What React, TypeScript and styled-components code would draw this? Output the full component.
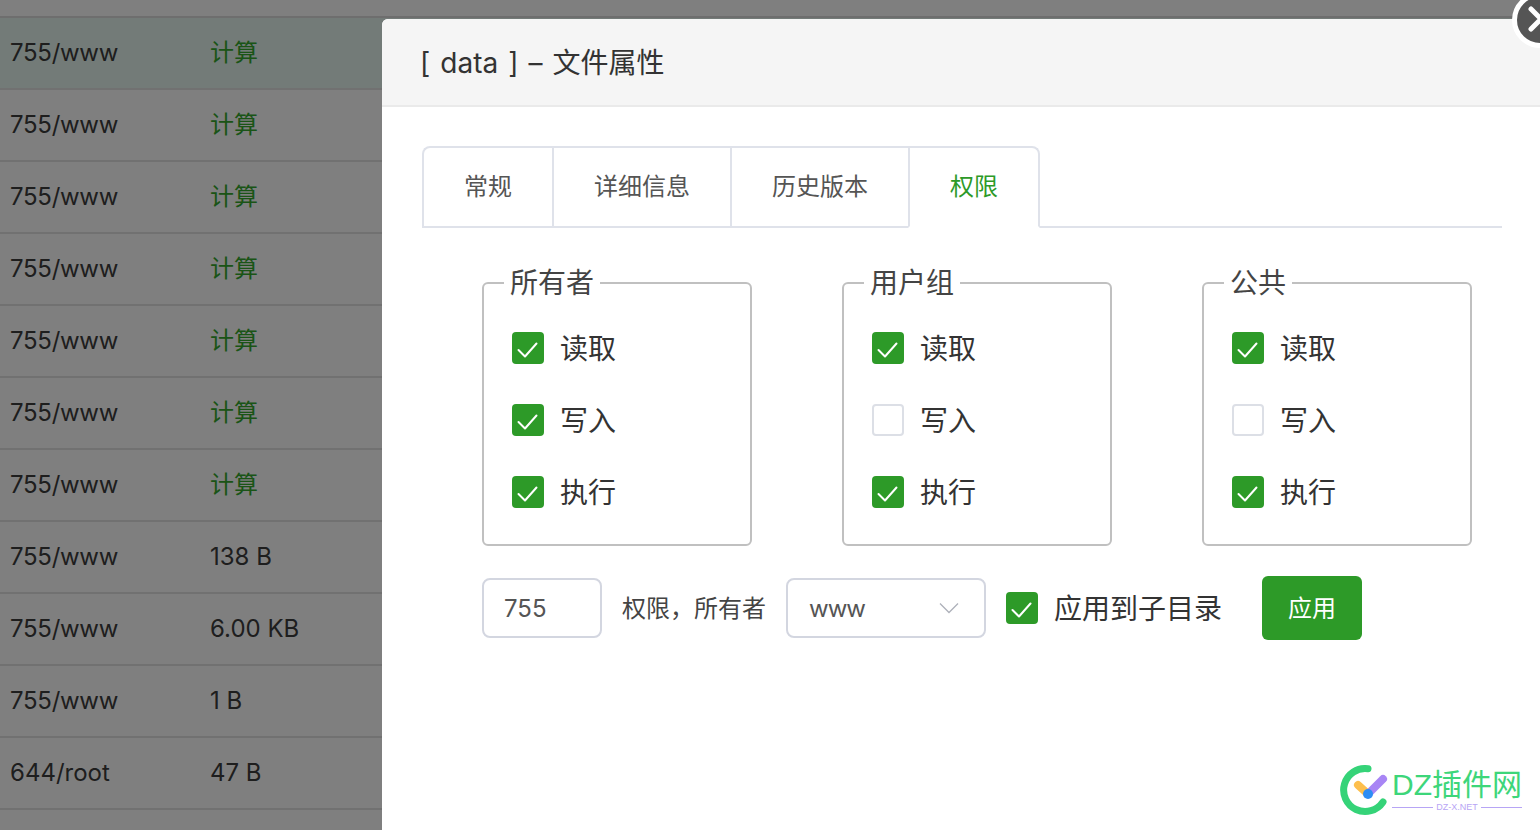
import React from "react";
import styled, { createGlobalStyle } from "styled-components";

const FONT = `Inter, "Noto Sans CJK SC", sans-serif`;
const GREEN = "#2d9a28";

const Global = createGlobalStyle`
  html, body { margin: 0; padding: 0; height: 100%; overflow: hidden; background: #fff; }
  #root { height: 100%; }
  * { box-sizing: border-box; }
`;

const Page = styled.div`
  position: relative;
  width: 1540px;
  height: 830px;
  overflow: hidden;
  font-family: ${FONT};
`;

const FileTable = styled.div`
  display: flex;
  flex-direction: column;
  width: 100%;
`;

const TopStrip = styled.div`
  height: 18px;
  border-bottom: 2px solid #dcdcdc;
`;

const FileRow = styled.div<{ $active?: boolean }>`
  display: grid;
  grid-template-columns: 200px 1fr;
  align-items: center;
  height: 72px;
  padding: 0 0 2px 10px;
  flex: none;
  border-bottom: 2px solid #e2e2e2;
  background: ${(p) => (p.$active ? "#e6f6f0" : "#fff")};
  font-size: 24px;
  color: #3c3c3c;
`;

const PermCell = styled.span<{ $tight?: boolean }>`
  letter-spacing: ${(p) => (p.$tight ? "-0.3px" : "0")};
`;

const SizeCell = styled.span<{ $calc?: boolean }>`
  font-size: 24px;
  padding-bottom: ${(p) => (p.$calc ? "4px" : "0")};
  color: ${(p) => (p.$calc ? "#34a82c" : "#3c3c3c")};
`;

const Mask = styled.div`
  position: absolute;
  inset: 0;
  background: rgba(0, 0, 0, 0.5);
`;

const Modal = styled.div`
  position: absolute;
  left: 382px;
  top: 19px;
  width: 1160px;
  height: 900px;
  background: #fff;
  border-radius: 6px 6px 0 0;
`;

const ModalHeader = styled.div`
  display: flex;
  align-items: center;
  height: 88px;
  padding: 0 38px 2px;
  background: #f5f5f5;
  border-bottom: 2px solid #eaeaea;
  border-radius: 6px 6px 0 0;
  font-size: 28px;
  word-spacing: 2.2px;
  color: #333;
`;

const CloseButton = styled.div`
  position: absolute;
  left: 1130px;
  top: -27px;
  width: 56px;
  height: 56px;
  border-radius: 50%;
  background: #555;
  border: 5px solid #fff;
  display: flex;
  align-items: center;
  justify-content: center;
`;

const ModalBody = styled.div`
  padding: 39px 40px 0;
`;

const TabBar = styled.div`
  display: flex;
  height: 82px;
  border-bottom: 2px solid #dfe2ea;
`;

const Tab = styled.div<{ $active?: boolean; $first?: boolean; $last?: boolean }>`
  height: 82px;
  padding: 0 40px 5px;
  display: flex;
  align-items: center;
  background: #fff;
  font-size: 24px;
  color: ${(p) => (p.$active ? GREEN : "#555")};
  border-top: 2px solid #dfe2ea;
  border-left: 2px solid #dfe2ea;
  border-right: ${(p) => (p.$last ? "2px solid #dfe2ea" : "none")};
  border-bottom: 2px solid ${(p) => (p.$active ? "#fff" : "#dfe2ea")};
  border-top-left-radius: ${(p) => (p.$first ? "8px" : "0")};
  border-top-right-radius: ${(p) => (p.$last ? "8px" : "0")};
`;

const Panel = styled.div`
  padding: 0 0 0 60px;
`;

const Groups = styled.div`
  display: flex;
  gap: 90px;
  margin-top: 40px;
`;

const Group = styled.fieldset`
  width: 270px;
  height: 278px;
  margin: 0;
  padding: 14px 0 0 28px;
  border: 2px solid #c0c0c0;
  border-radius: 6px;
  min-inline-size: 0;
`;

const GroupLegend = styled.legend`
  margin-left: -8px;
  padding: 0 6px;
  font-size: 28px;
  line-height: 30px;
  color: #444;
`;

const PermRow = styled.div`
  display: flex;
  align-items: center;
  gap: 16px;
  height: 72px;
  font-size: 28px;
  color: #333;
`;

const CheckLabel = styled.span`
  padding-bottom: 2px;
`;

const Box = styled.span<{ $on?: boolean }>`
  display: flex;
  flex: none;
  align-items: center;
  justify-content: center;
  width: 32px;
  height: 32px;
  border-radius: 4px;
  background: ${(p) => (p.$on ? GREEN : "#fff")};
  border: ${(p) => (p.$on ? "none" : "2px solid #dcdfe6")};
`;

const Footer = styled.div`
  display: flex;
  align-items: center;
  margin-top: 30px;
  height: 64px;
`;

const NumberField = styled.div`
  width: 120px;
  height: 60px;
  padding-left: 20px;
  display: flex;
  align-items: center;
  border: 2px solid #d3d6e0;
  border-radius: 8px;
  font-size: 24px;
  color: #555;
`;

const OwnerLabel = styled.span`
  margin: 0 20px;
  padding-bottom: 4px;
  font-size: 24px;
  color: #444;
`;

const SelectField = styled.div`
  width: 200px;
  height: 60px;
  padding: 0 25px 0 21px;
  display: flex;
  align-items: center;
  justify-content: space-between;
  border: 2px solid #d3d6e0;
  border-radius: 8px;
  font-size: 24px;
  letter-spacing: -1px;
  color: #555;
`;

const Recursive = styled.div`
  display: flex;
  align-items: center;
  gap: 16px;
  margin-left: 20px;
  font-size: 28px;
  color: #333;
`;

const ApplyButton = styled.button`
  width: 100px;
  height: 64px;
  margin-left: 40px;
  padding: 0 0 4px;
  border: none;
  border-radius: 6px;
  background: ${GREEN};
  color: #fff;
  font-family: ${FONT};
  font-size: 24px;
`;

const Watermark = styled.div`
  position: absolute;
  left: 1340px;
  top: 765px;
  width: 182px;
  height: 52px;
  display: flex;
  gap: 2px;
`;

const WatermarkText = styled.div`
  display: flex;
  flex-direction: column;
  margin-top: 4px;
  width: 130px;
  color: #3dd67a;
`;

const WatermarkName = styled.div`
  font-family: "Liberation Sans", "Noto Sans CJK SC", sans-serif;
  font-size: 30px;
  line-height: 32px;
  white-space: nowrap;
`;

const WatermarkSub = styled.div`
  display: flex;
  align-items: center;
  gap: 3px;
  font-family: "Liberation Sans", sans-serif;
  font-size: 9px;
  line-height: 12px;
  color: #b7a5f5;
  &::before, &::after {
    content: "";
    flex: 1;
    height: 1px;
    background: #b7a5f5;
  }
`;

const Check = () => (
  <svg width="32" height="32" viewBox="0 0 32 32" fill="none">
    <path d="M6.5 18l6.5 6.5L24.5 11.5" stroke="#fff" strokeWidth="2" strokeLinecap="round" strokeLinejoin="round" />
  </svg>
);

const Perm = ({ label, on }: { label: string; on: boolean }) => (
  <PermRow>
    <Box $on={on}>{on && <Check />}</Box>
    <CheckLabel>{label}</CheckLabel>
  </PermRow>
);

const rows: [string, string, boolean][] = [
  ["755/www", "计算", true],
  ["755/www", "计算", true],
  ["755/www", "计算", true],
  ["755/www", "计算", true],
  ["755/www", "计算", true],
  ["755/www", "计算", true],
  ["755/www", "计算", true],
  ["755/www", "138 B", false],
  ["755/www", "6.00 KB", false],
  ["755/www", "1 B", false],
  ["644/root", "47 B", false],
];

const groups = [
  { name: "所有者", write: true },
  { name: "用户组", write: false },
  { name: "公共", write: false },
];

export default function App() {
  return (
    <Page>
      <Global />
      <FileTable>
        <TopStrip />
        {rows.map(([perm, size, calc], i) => (
          <FileRow key={i} $active={i === 0}>
            <PermCell $tight={perm.endsWith("www")}>{perm}</PermCell>
            <SizeCell $calc={calc}>{size}</SizeCell>
          </FileRow>
        ))}
      </FileTable>
      <Mask />
      <Modal>
        <ModalHeader>[ data ] – 文件属性</ModalHeader>
        <CloseButton>
          <svg width="46" height="46" viewBox="0 0 46 46" fill="none">
            <path d="M14 12l20 20M14 32l20-20" stroke="#fff" strokeWidth="5" strokeLinecap="round" />
          </svg>
        </CloseButton>
        <ModalBody>
          <TabBar>
            <Tab $first>常规</Tab>
            <Tab>详细信息</Tab>
            <Tab>历史版本</Tab>
            <Tab $active $last>权限</Tab>
          </TabBar>
          <Panel>
            <Groups>
              {groups.map((g) => (
                <Group key={g.name}>
                  <GroupLegend>{g.name}</GroupLegend>
                  <Perm label="读取" on />
                  <Perm label="写入" on={g.write} />
                  <Perm label="执行" on />
                </Group>
              ))}
            </Groups>
            <Footer>
              <NumberField>755</NumberField>
              <OwnerLabel>权限，所有者</OwnerLabel>
              <SelectField>
                www
                <svg width="20" height="12" viewBox="0 0 20 12" fill="none">
                  <path d="M1 1.5l9 9 9-9" stroke="#aeb1ba" strokeWidth="1.3" />
                </svg>
              </SelectField>
              <Recursive>
                <Box $on><Check /></Box>
                <CheckLabel>应用到子目录</CheckLabel>
              </Recursive>
              <ApplyButton>应用</ApplyButton>
            </Footer>
          </Panel>
        </ModalBody>
      </Modal>
      <Watermark>
        <svg width="50" height="52" viewBox="0 0 50 52" fill="none">
          <path d="M28 3.7A21.5 21.5 0 1 0 43 37" stroke="#35d378" strokeWidth="7" strokeLinecap="round" />
          <path d="M18 20l10 9" stroke="#fdbf4d" strokeWidth="8" strokeLinecap="round" />
          <path d="M28 29l15-15" stroke="#a885f5" strokeWidth="8" strokeLinecap="round" />
          <circle cx="28" cy="29" r="5" fill="#2d8df5" />
        </svg>
        <WatermarkText>
          <WatermarkName>DZ插件网</WatermarkName>
          <WatermarkSub>DZ-X.NET</WatermarkSub>
        </WatermarkText>
      </Watermark>
    </Page>
  );
}
